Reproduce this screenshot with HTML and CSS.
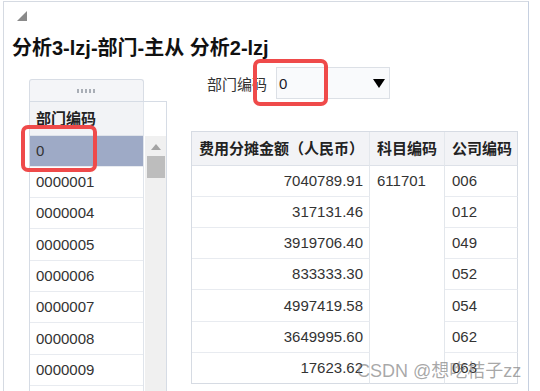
FILE: index.html
```html
<!DOCTYPE html>
<html lang="zh">
<head>
    <meta charset="UTF-8">
    <title>分析3-lzj-部门-主从</title>
    <link rel="stylesheet" href="styles.css">
</head>
<body>
    <div class="frame">
        <div class="toolbar">
            <svg class="collapse" width="10" height="10" viewBox="0 0 10 10"><polygon points="10,0 10,10 0,10"/></svg>
        </div>
        <h1 class="title">分析3-lzj-部门-主从 分析2-lzj</h1>
        <div class="content">
            <!-- master list -->
            <div class="master">
                <div class="handle"><span class="grip"></span></div>
                <div class="master-grid">
                    <div class="master-list">
                        <div class="m-head">部门编码</div>
                        <div class="m-row selected">0</div>
                        <div class="m-row">0000001</div>
                        <div class="m-row">0000004</div>
                        <div class="m-row tall">0000005</div>
                        <div class="m-row">0000006</div>
                        <div class="m-row">0000007</div>
                        <div class="m-row tall">0000008</div>
                        <div class="m-row">0000009</div>
                        <div class="m-row"></div>
                    </div>
                    <div class="m-scroll">
                        <div class="m-gutter"></div>
                        <div class="m-track">
                            <svg class="m-arrow" width="10" height="6" viewBox="0 0 10 6"><polygon points="5,0 10,6 0,6"/></svg>
                            <div class="m-thumb"></div>
                        </div>
                    </div>
                </div>
            </div>
            <!-- detail -->
            <div class="detail">
                <div class="prompt">
                    <label class="prompt-label">部门编码</label>
                    <div class="prompt-select">
                        <span>0</span>
                        <svg width="12" height="9" viewBox="0 0 12 9"><polygon points="0,0 12,0 6,9"/></svg>
                    </div>
                </div>
                <table class="detail-table">
                    <thead>
                        <tr>
                            <th class="c-amt">费用分摊金额（人民币）</th>
                            <th class="c-acct">科目编码</th>
                            <th class="c-comp">公司编码</th>
                        </tr>
                    </thead>
                    <tbody>
                        <tr><td class="num">7040789.91</td><td class="merged" rowspan="7">611701</td><td class="comp">006</td></tr>
                        <tr><td class="num">317131.46</td><td class="comp">012</td></tr>
                        <tr><td class="num">3919706.40</td><td class="comp">049</td></tr>
                        <tr><td class="num">833333.30</td><td class="comp">052</td></tr>
                        <tr class="tall"><td class="num">4997419.58</td><td class="comp">054</td></tr>
                        <tr><td class="num">3649995.60</td><td class="comp">062</td></tr>
                        <tr class="last"><td class="num">17623.62</td><td class="comp">063</td></tr>
                    </tbody>
                </table>
            </div>
        </div>
    </div>
    <div class="mark mark-master"></div>
    <div class="mark mark-prompt"></div>
    <div class="watermark">CSDN @想吃桔子zz</div>
</body>
</html>
```

FILE: styles.css
```css
html, body { overflow: hidden; }
body { margin: 0; background: #fff; color: #333; font-family: "Liberation Sans", "Noto Sans CJK SC", sans-serif; }
.frame { margin: 1px 0 0 3px; width: 524px; height: 420px; border: 1px solid #d5dae2; border-right-color: #c6d0e0; border-bottom: none; }
.toolbar { padding: 9px 0 0 13px; height: 10px; }
.collapse { display: block; fill: #8a8a8a; }
.title { margin: 15px 0 0 8px; font-size: 20px; line-height: 24px; font-weight: bold; color: #111; }
.content { display: flex; align-items: flex-start; margin-top: 7px; }

/* master */
.master { margin: 12px 0 0 25px; width: 138px; }
.handle { width: 113px; height: 21px; border: 1px solid #d8dde5; border-bottom: none; border-radius: 3px 3px 0 0; background: #f4f5f8; display: flex; align-items: center; justify-content: center; }
.grip { width: 19px; height: 4px; background: repeating-linear-gradient(90deg, #a9aeb6 0 2px, transparent 2px 4px); }
.master-grid { display: flex; border: 1px solid #d6dce5; border-bottom: none; }
.master-list { width: 113px; border-right: 1px solid #dfe4eb; font-size: 15px; }
.m-head { height: 33px; line-height: 33px; padding-left: 6px; font-weight: bold; color: #222; background: #f2f3f6; border-bottom: 1px solid #dfe3ea; }
.m-row { height: 30px; line-height: 30px; padding-left: 6px; border-bottom: 1px solid #e8ebf0; }
.m-row.tall { height: 31px; line-height: 31px; }
.m-row.selected { background: #9eaac6; }
.m-scroll { flex: 1; padding-left: 1px; display: flex; flex-direction: column; }
.m-gutter { height: 34px; }
.m-track { flex: 1; background: #f0f0f0; padding-top: 8px; }
.m-arrow { display: block; margin-left: 6px; fill: #a3a3a3; }
.m-thumb { margin: 6px 0 0 2px; width: 18px; height: 22px; background: #bdbdbd; }

/* detail */
.detail { margin-left: 24px; }
.prompt { display: flex; padding-left: 16px; }
.prompt-label { width: 60px; margin-right: 9px; padding-top: 2px; font-size: 15px; line-height: 32px; color: #333; }
.prompt-select { box-sizing: border-box; width: 114px; height: 32px; padding: 0 4px 0 2px; border: 1px solid #dce0e6; background: #f9fafc; display: flex; align-items: center; justify-content: space-between; font-size: 15px; color: #1a1a2a; }
.prompt-select svg { display: block; fill: #000; }
.detail-table { margin-top: 30px; width: 327px; table-layout: fixed; border-collapse: separate; border-spacing: 0; border-top: 1px solid #d6dbe3; border-left: 1px solid #d6dbe3; font-size: 15px; }
.detail-table th, .detail-table td { box-sizing: border-box; padding: 0 7px; line-height: 30px; text-align: left; white-space: nowrap; border-right: 1px solid #e3e7ec; border-bottom: 1px solid #e8ebf0; }
.detail-table th { line-height: 33px; background: #f2f3f6; font-weight: bold; color: #222; border-bottom-color: #dde1e8; }
.c-amt { width: 178px; }
.c-acct { width: 75px; }
.c-comp { width: 73px; }
.detail-table .c-comp, .detail-table .comp { border-right-color: #d6dbe3; }
.detail-table td.num { text-align: right; padding-right: 6px; }
.detail-table td.merged { vertical-align: top; border-bottom-color: #d6dbe3; }
.detail-table tr.tall td.num, .detail-table tr.tall td.comp { line-height: 31px; }
.detail-table tr.last td { border-bottom-color: #d6dbe3; }

/* annotations */
.mark { position: absolute; box-sizing: border-box; border: 4px solid #ef4a4a; border-radius: 7px; }
.mark-master { left: 21px; top: 125px; width: 76px; height: 47px; }
.mark-prompt { left: 253px; top: 59px; width: 75px; height: 47px; }
.watermark { position: absolute; left: 357px; top: 361px; font-size: 18px; line-height: 20px; color: rgba(110, 110, 110, 0.6); white-space: nowrap; }
```
